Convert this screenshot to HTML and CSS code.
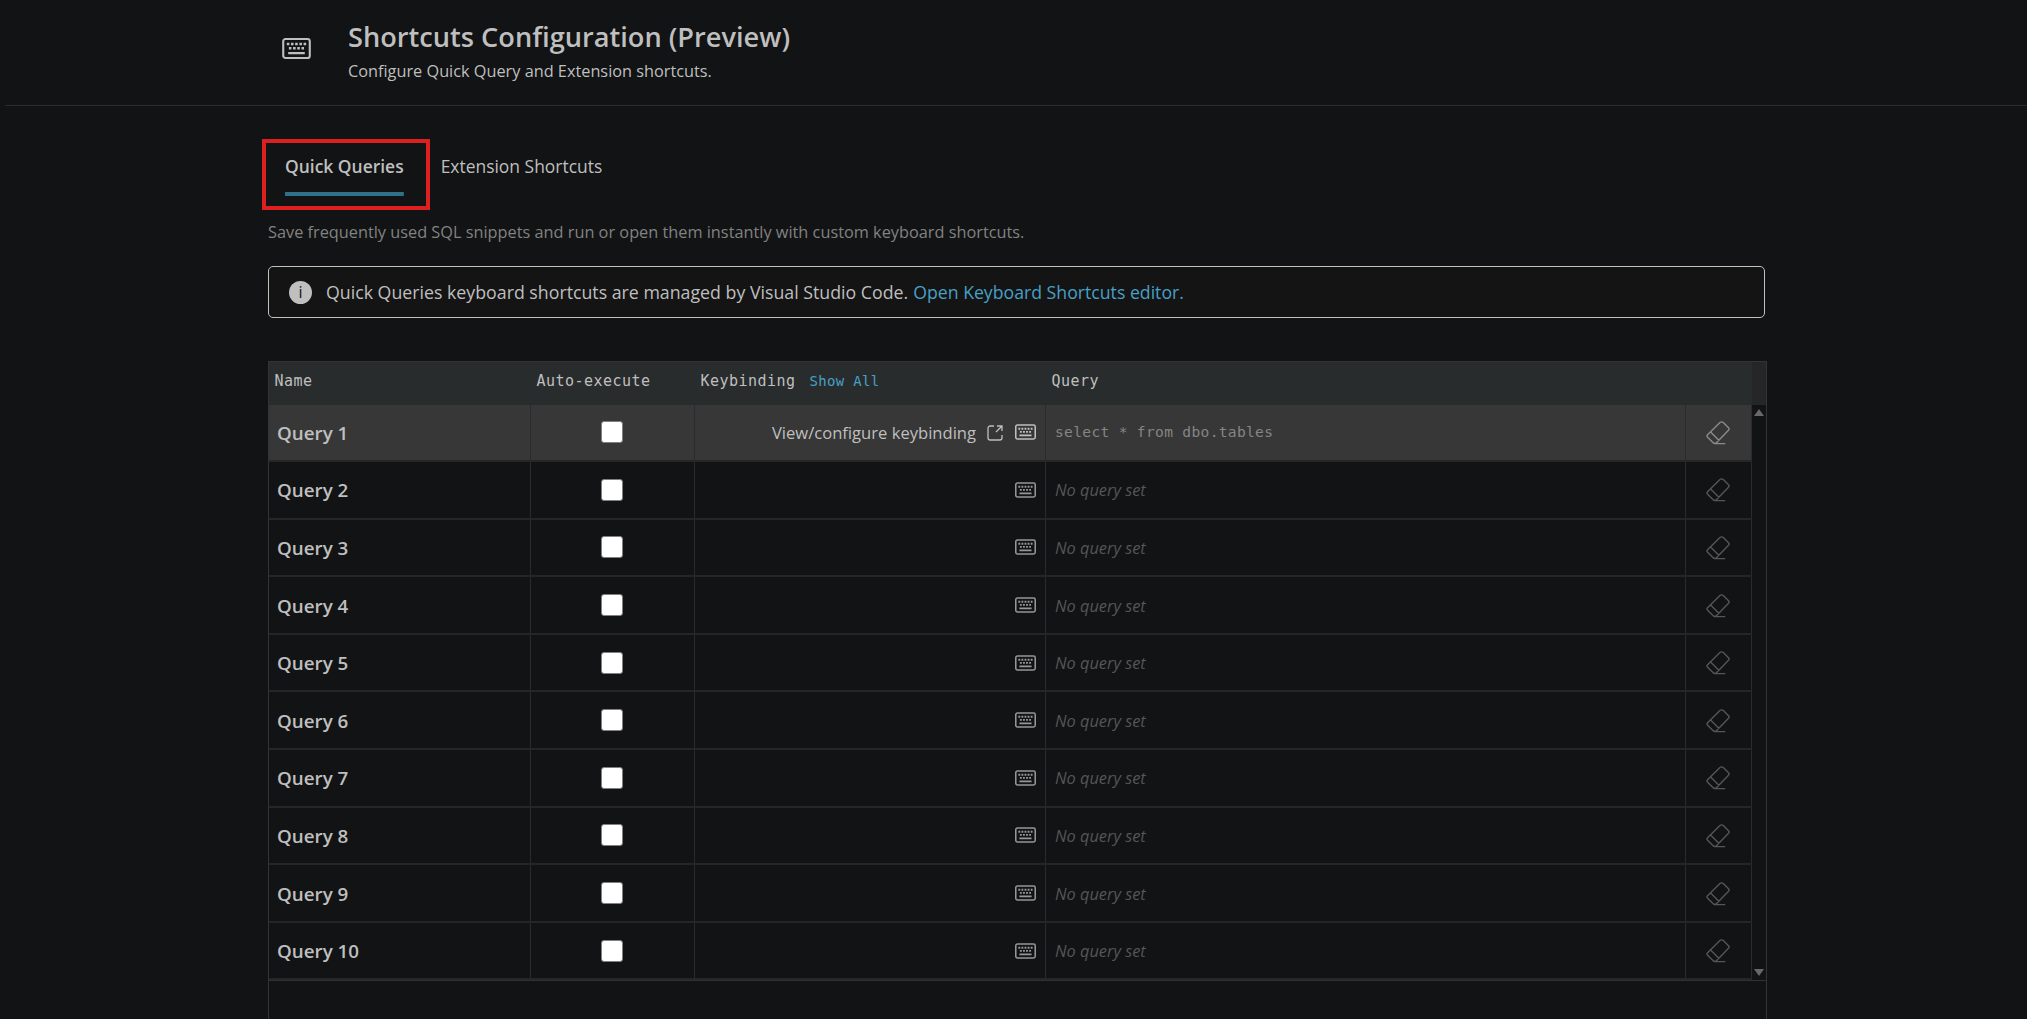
FILE: index.html
```html
<!DOCTYPE html>
<html lang="en">
<head>
  <meta charset="UTF-8">
  <meta name="viewport" content="width=device-width, initial-scale=1.0">
  <title>Shortcuts Configuration (Preview)</title>
  <link rel="stylesheet" href="styles.css">
</head>
<body>
  <!-- shared icons -->
  <svg class="sprite" aria-hidden="true">
    <symbol id="keyboard" viewBox="0 0 30 22">
      <rect x="1.1" y="1.1" width="27.8" height="19.8" rx="2.4" fill="none" stroke="currentColor" stroke-width="2.2"/>
      <path d="M4.8 5h2.7v2.7H4.8zM9.2 5h2.7v2.7H9.2zM13.6 5h2.7v2.7h-2.7zM18 5h2.7v2.7H18zM22.4 5h2.7v2.7h-2.7zM7 9.4h2.7v2.7H7zM11.4 9.4h2.7v2.7h-2.7zM15.8 9.4h2.7v2.7h-2.7zM20.2 9.4h2.7v2.7h-2.7zM6.3 14.6h17.4v2.3H6.3z" fill="currentColor"/>
    </symbol>
    <symbol id="open" viewBox="0 0 16 16">
      <path d="M7 1H3.2A2.2 2.2 0 0 0 1 3.2v9.6A2.2 2.2 0 0 0 3.2 15h9.6a2.2 2.2 0 0 0 2.2-2.2V10M10 1h5v5M15 1L9 7" fill="none" stroke="currentColor" stroke-width="1.3"/>
    </symbol>
    <symbol id="eraser" viewBox="0 0 24 24">
      <path d="M13.9 1.6L1.6 13.7a1.8 1.8 0 0 0 0 2.5l5.6 5.6a2.2 2.2 0 0 0 3.2 0L22.5 9.3a1.8 1.8 0 0 0 0-2.5l-5.2-5.2a2.3 2.3 0 0 0-3.4 0zM4.6 11l8.5 8.5M8.8 22.6h10.4" fill="none" stroke="currentColor" stroke-width="1.4"/>
    </symbol>
  </svg>

  <header class="header">
    <svg class="header-icon"><use href="#keyboard"/></svg>
    <div>
      <h1>Shortcuts Configuration (Preview)</h1>
      <p>Configure Quick Query and Extension shortcuts.</p>
    </div>
  </header>

  <main class="content">
    <div class="tabs">
      <button class="tab active">Quick Queries</button>
      <button class="tab">Extension Shortcuts</button>
      <span class="highlight"></span>
    </div>

    <p class="description">Save frequently used SQL snippets and run or open them instantly with custom keyboard shortcuts.</p>

    <div class="info">
      <span class="info-icon">i</span>
      <span>Quick Queries keyboard shortcuts are managed by Visual Studio Code.</span>
      <a href="#">Open Keyboard Shortcuts editor.</a>
    </div>

    <div class="table">
      <div class="table-head">
        <div>Name</div>
        <div>Auto-execute</div>
        <div>Keybinding<a href="#">Show All</a></div>
        <div>Query</div>
        <div></div>
        <div class="corner"></div>
      </div>
      <div class="table-body">
        <div class="rows" id="rows"></div>
        <div class="scrollbar">
          <span class="arrow up"></span>
          <span class="arrow down"></span>
        </div>
      </div>
    </div>
  </main>

  <script>
    const rows = document.getElementById('rows');

    for (let i = 1; i <= 10; i++) {
      const selected = i === 1;
      const link = selected
        ? '<span class="configure">View/configure keybinding</span><svg class="open-icon"><use href="#open"/></svg>'
        : '';
      const query = selected
        ? '<div class="query">select * from dbo.tables</div>'
        : '<div class="query empty">No query set</div>';

      rows.innerHTML += `
        <div class="row ${selected ? 'selected' : ''}">
          <div class="name">Query ${i}</div>
          <div class="auto"><input type="checkbox"></div>
          <div class="keybinding">${link}<svg class="key-icon"><use href="#keyboard"/></svg></div>
          ${query}
          <div class="clear"><svg class="eraser-icon"><use href="#eraser"/></svg></div>
        </div>`;
    }
  </script>
</body>
</html>
```

FILE: styles.css
```css
* {
  box-sizing: border-box;
}

body {
  margin: 0;
  height: 1019px;
  overflow: hidden;
  display: flex;
  flex-direction: column;
  background: #121314;
  color: #bfbfbf;
  font-family: 'Open Sans', 'Noto Sans', sans-serif;
  font-size: 16.3px;
}

h1,
p {
  margin: 0;
}

a {
  color: #48a0c7;
  text-decoration: none;
}

.sprite {
  position: absolute;
  width: 0;
  height: 0;
}

.header {
  flex: none;
  display: flex;
  gap: 37px;
  height: 106px;
  margin-left: 5px;
  padding: 19px 0 0 277px;
  border-bottom: 1px solid #2a2b2c;
}

.header-icon {
  width: 29px;
  height: 21px;
  margin-top: 19px;
}

.header h1 {
  font-size: 27.2px;
  font-weight: 600;
  line-height: 36px;
}

.header p {
  margin-top: 4px;
  line-height: 24px;
}

.content {
  flex: 1;
  display: flex;
  flex-direction: column;
  width: 1499px;
  margin-left: 268px;
  padding-top: 33px;
}

.tabs {
  position: relative;
  display: flex;
  gap: 37px;
  height: 71px;
  padding: 15px 0 14px 17px;
}

.tab {
  padding: 0 0 18px;
  border: none;
  background: none;
  color: inherit;
  font-family: inherit;
  font-size: 17.46px;
  line-height: 24px;
}

.tab.active {
  font-weight: 600;
  background: linear-gradient(#317089, #317089) bottom / 100% 4px no-repeat;
}

/* red frame around the active tab */
.highlight {
  position: absolute;
  left: -6px;
  top: 0;
  width: 168px;
  height: 71px;
  border: 4px solid #dc1f1f;
}

.description {
  margin-top: 11px;
  color: #828282;
  font-size: 16.31px;
  line-height: 22px;
}

.info {
  display: flex;
  align-items: center;
  width: 1497px;
  height: 52px;
  margin-top: 23px;
  padding-left: 20px;
  border: 1px solid #bfc3c0;
  border-radius: 5px;
  background: #141414;
  font-size: 17.75px;
}

.info a {
  margin-left: 5px;
  font-size: 17.68px;
}

.info-icon {
  width: 23px;
  height: 23px;
  margin-right: 14px;
  border-radius: 50%;
  background: #bfbfbf;
  color: #141414;
  font-size: 16px;
  line-height: 22px;
  text-align: center;
}

.table {
  flex: 1;
  margin-top: 43px;
  border: 1px solid #333435;
  border-bottom: none;
}

.table-head,
.row {
  display: grid;
  grid-template-columns: 262px 164px 351px 640px 66px;
}

.table-head {
  grid-template-columns: 262px 164px 351px 640px 66px 1fr;
  height: 42.5px;
  background: #292c2d;
  font-family: 'DejaVu Sans Mono', monospace;
  font-size: 15px;
  letter-spacing: 0.47px;
  line-height: 39px;
}

.table-head > div {
  padding-left: 5.5px;
}

.table-head a {
  margin-left: 14px;
  font-size: 14px;
  letter-spacing: 0.32px;
}

.table-head .corner {
  background: #252627;
}

.table-body {
  display: flex;
  border-bottom: 1px solid #303132;
}

.row {
  height: 57.6px;
}

.row > div {
  display: flex;
  align-items: center;
  border-right: 1px solid #2a2b2c;
  border-bottom: 2px solid #252627;
}

.row.selected {
  background: #373737;
}

.row .name {
  padding: 1px 0 0 8px;
  font-size: 18.8px;
  font-weight: 600;
}

.row .auto {
  justify-content: center;
  padding-right: 2px;
}

.auto input {
  appearance: none;
  width: 22px;
  height: 22px;
  margin: 0;
  border: 1px solid #808080;
  border-radius: 3px;
  background: #fff;
}

.row .keybinding {
  justify-content: flex-end;
  padding-right: 9px;
}

.configure {
  font-size: 16.58px;
}

.open-icon {
  width: 16px;
  height: 16px;
  margin: 1px 12px 0 11px;
}

.key-icon {
  width: 21px;
  height: 16px;
  color: #969696;
}

.selected .key-icon {
  color: #bfbfbf;
}

.row .query {
  padding: 0 0 2px 9px;
  color: #858585;
  font-family: 'DejaVu Sans Mono', monospace;
  font-size: 14.6px;
  letter-spacing: 0.31px;
}

.row .query.empty {
  padding: 1px 0 0 9px;
  color: #555657;
  font-family: inherit;
  font-size: 16.35px;
  font-style: italic;
  letter-spacing: 0;
}

.row .clear {
  justify-content: center;
  padding: 1px 1px 0 0;
  color: #555657;
}

.row.selected .clear {
  color: #8b8b8b;
}

.eraser-icon {
  width: 24px;
  height: 24px;
}

.scrollbar {
  flex: 1;
  display: flex;
  flex-direction: column;
  justify-content: space-between;
  align-items: center;
  padding: 4px 0;
}

.arrow {
  border: 5px solid transparent;
}

.arrow.up {
  border-top: none;
  border-bottom: 7px solid #686868;
}

.arrow.down {
  border-bottom: none;
  border-top: 7px solid #686868;
}
```
